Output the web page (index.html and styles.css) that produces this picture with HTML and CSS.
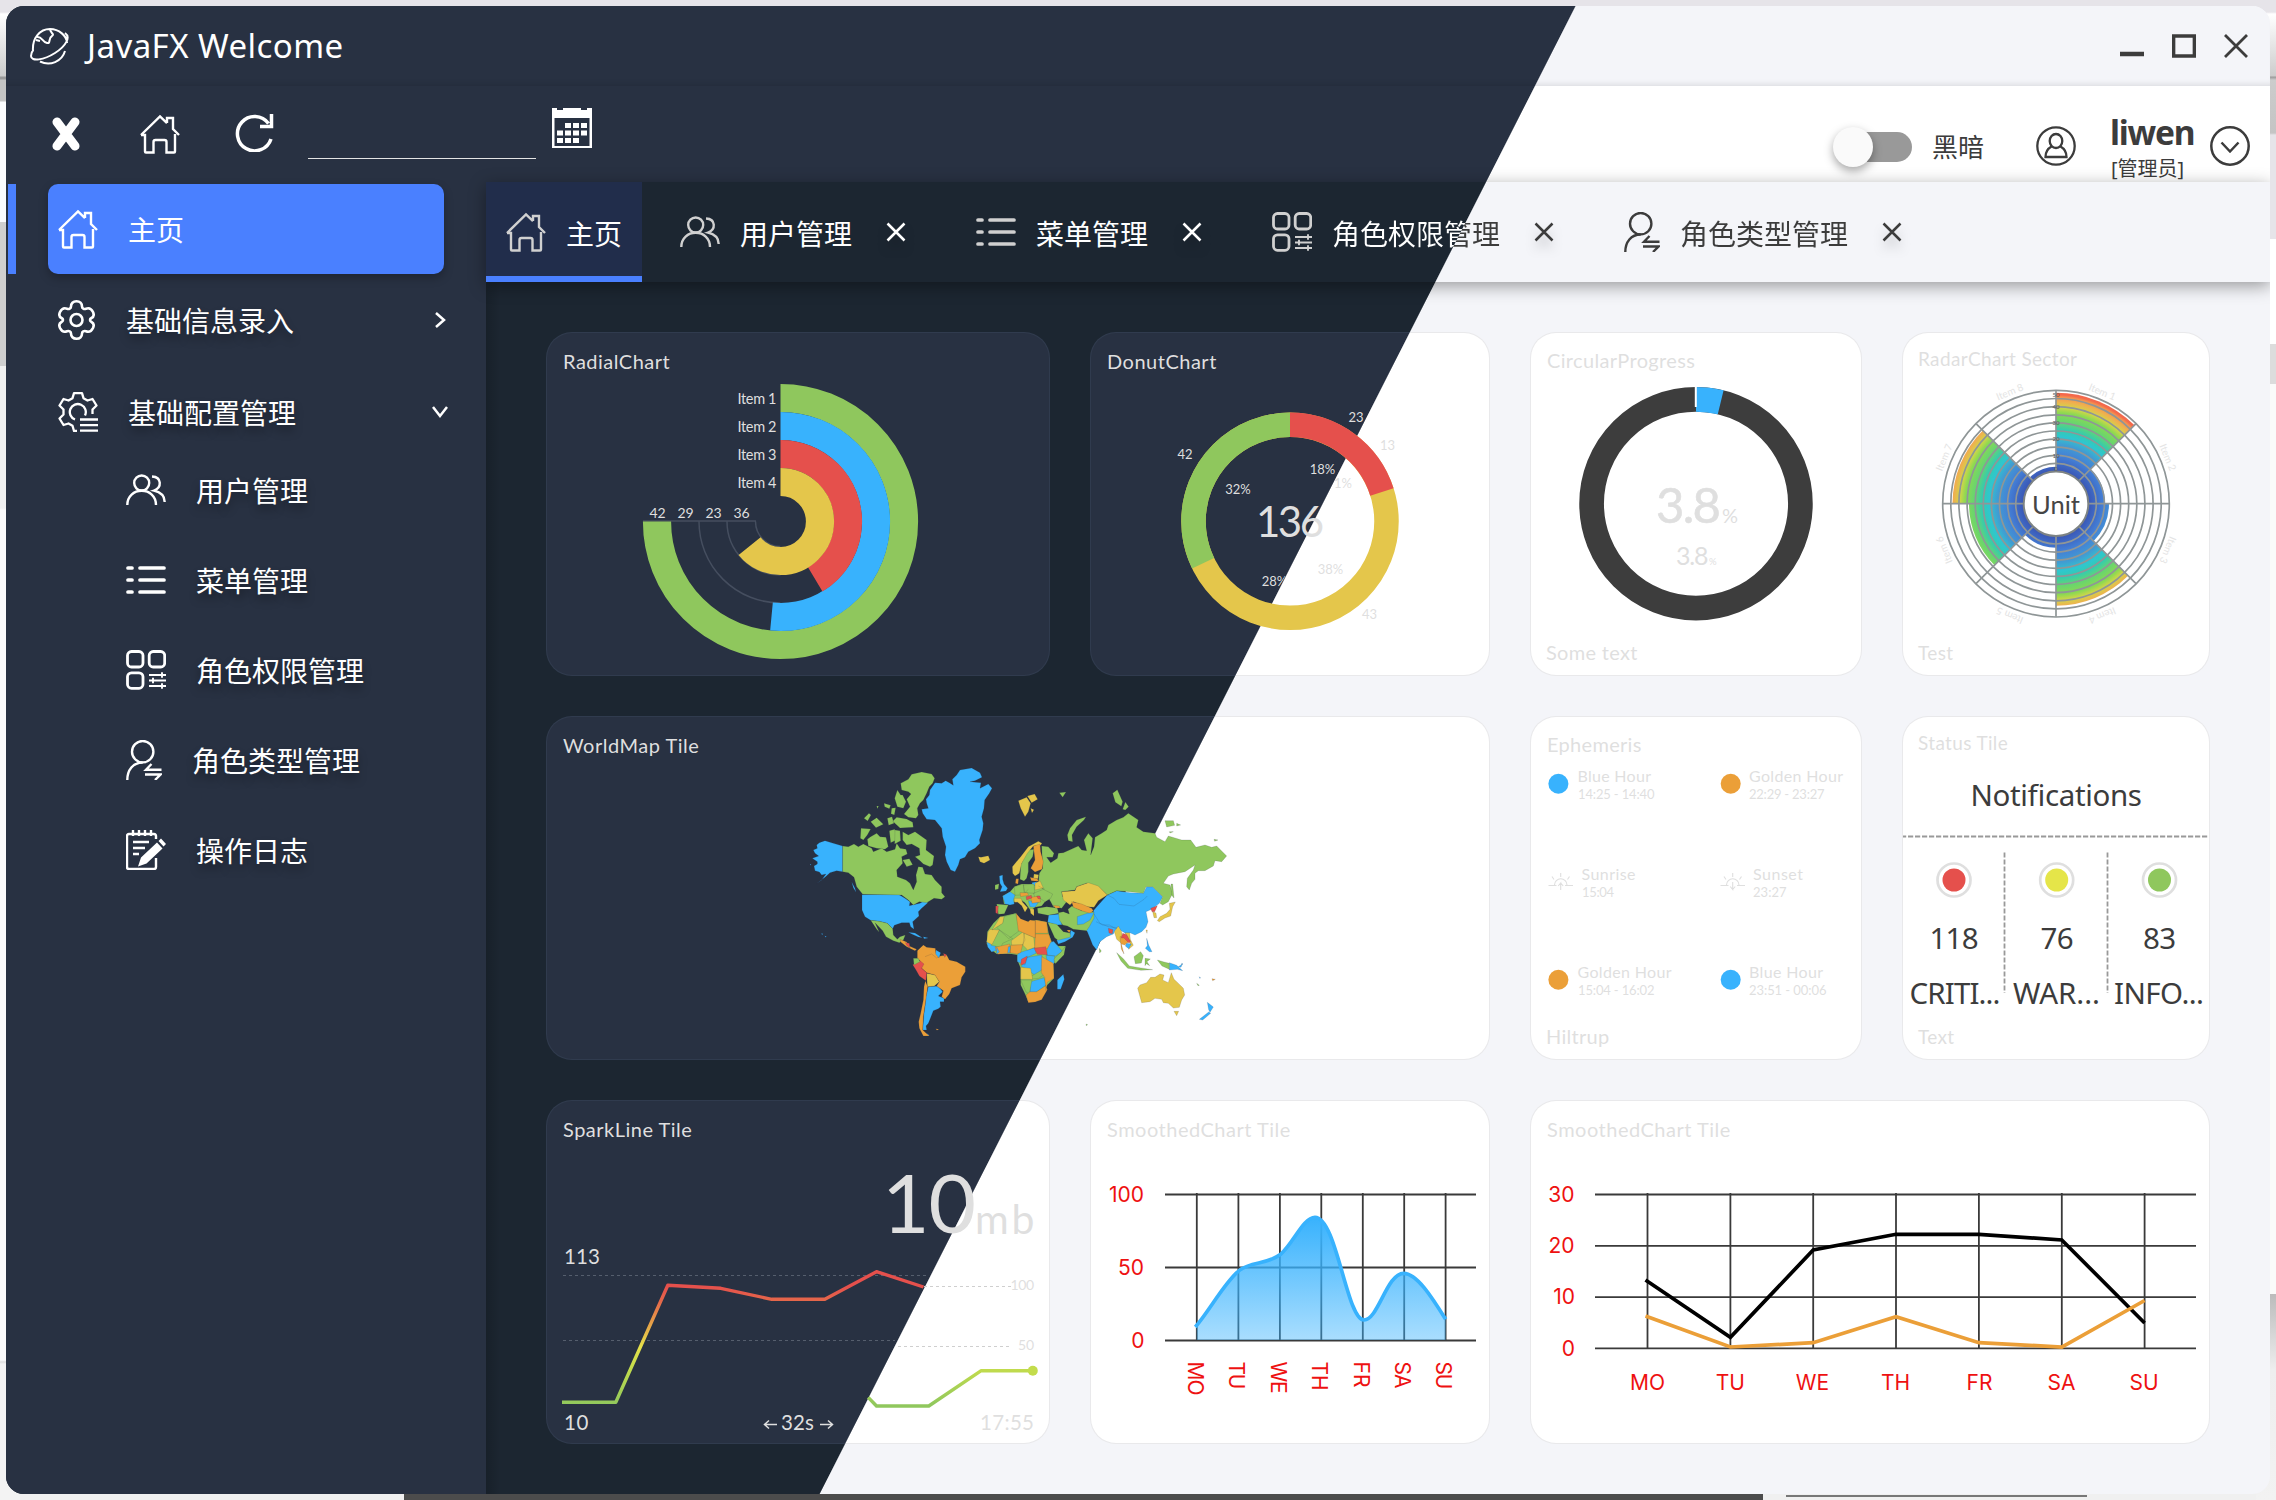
FILE: index.html
```html
<!DOCTYPE html>
<html lang="zh-CN">
<head>
<meta charset="utf-8">
<title>JavaFX Welcome</title>
<link rel="stylesheet" href="styles.css">
</head>
<body>
<svg class="defs" width="0" height="0" aria-hidden="true">
  <symbol id="home" viewBox="0 0 40 40"><path d="M1 21 20 2.500 27 9.200M27 9V4h6v11l6 6M1 21h4v16.500q0 1 1 1h7.500V28q0-2 2-2h9q2 0 2 2v10.500H34q1 0 1-1V20"/></symbol>
  <symbol id="users" viewBox="0 0 40 32"><circle cx="15.700" cy="9" r="7.500"/><path d="M1.300 31C1.300 22 8 16.800 15.700 16.800S30 22 30 31M26 2.500C36 3 36 13.500 28 16.500 34 18 38.700 22 38.700 28"/></symbol>
  <symbol id="list" viewBox="0 0 40 28"><path stroke-width="3.700" stroke-linecap="round" d="M2 2h4M14 2h24M2 14h4M14 14h24M2 26h4M14 26h24"/></symbol>
  <symbol id="perm" viewBox="0 0 40 40"><g stroke-width="2.800"><rect x="1.500" y="1.500" width="15.500" height="15.500" rx="4"/><rect x="23.200" y="1.500" width="15.500" height="15.500" rx="4"/><rect x="1.500" y="22.800" width="15.500" height="15.500" rx="4"/></g><path stroke-width="1.900" d="M23 25h17M23 30.500h17M23 36h17M36 22.300v5.400M27 27.800v5.400M36 33.300v5.400"/></symbol>
  <symbol id="role" viewBox="0 0 36 40"><circle cx="16.700" cy="11.700" r="10.700"/><path d="M1.300 40C1.300 30 7 22.500 16.700 22.500M25.500 24 20 29.700h15.500M19 34.500h15.500L29 40"/></symbol>
  <symbol id="log" viewBox="0 0 40 40"><path d="M30 9V6q0-2-2-2H3Q1 4 1 6v31q0 2 2 2h25q2 0 2-2v-9M7 0v6M13 0v6M19 0v6M25 0v6M7 12h16M7 18h12M7 24h6"/><path class="solid" stroke="none" d="m12 36.500 3-9L31 12.500l5.500 6L20.500 33.500zM32.500 11 35 8.500 40 14l-2.500 2.500z"/></symbol>
  <symbol id="gear" viewBox="0 0 37 40"><path stroke-width="2.600" d="M13 6.500C13 3.500 15 1.300 18.500 1.300S24 3.500 24 6.500C24 8.500 26 9.500 28 8.700 31 7.500 33.500 9 35 12 36.300 15 35.500 17 33.500 18 31.500 19 31.500 21 33.500 22 35.500 23 36.300 25 35 28 33.500 31 31 32.500 28 31.300 26 30.500 24 31.500 24 33.500 24 36.500 22 38.700 18.500 38.700S13 36.500 13 33.500C13 31.500 11 30.500 9 31.300 6 32.500 3.500 31 2 28 .7 25 1.500 23 3.500 22 5.500 21 5.500 19 3.500 18 1.500 17 .7 15 2 12 3.500 9 6 7.500 9 8.700 11 9.500 13 8.500 13 6.500Z"/><circle cx="18.500" cy="20" r="6" stroke-width="2.600"/></symbol>
  <symbol id="gearlist" viewBox="0 0 40 40"><path stroke-width="2.300" stroke-linejoin="round" d="M19 39h-3l-1.500-5.200-4-2.300-5 1.500-4-6.500 4-4v-5l-4-4 4-6.500 5 1.500 4-2.300L16 1.200h8l1.500 5 4 2.300 5-1.500 4 6.500-4 4V22M17 27.500A8 8 0 1 1 27 23.500M22 27.500h18M22 33.200h18M22 38.700h18"/></symbol>
  <symbol id="close" viewBox="0 0 20 20"><path d="m1.500 1.500 17 17M18.500 1.500l-17 17"/></symbol>
</svg>

<div class="window">
  <header class="titlebar">
    <svg class="logo" viewBox="0 0 40 37" fill="none" stroke="#fff" stroke-width="2"><path d="M3 23C2 10 10 1 20 1c9 0 17 7 17 14M35 5c6 4 1 13-10 20S1 34 1 28c0-2 .5-4 2-5.500M10 33.500c10 5 22 0 25-10.500M7 9c5-1 5 5 10 6 4 1 1-5 5-7 3-2-2-3-2-7M6 12l4 1"/></svg>
    <h1>JavaFX Welcome</h1>
    <div class="winbtns">
      <svg viewBox="0 0 24 24" width="24" height="24"><path d="M0 20h24" stroke="#3c3c3c" stroke-width="4.500"/></svg>
      <svg viewBox="0 0 24 24" width="24" height="24"><path d="M1.500 2h21v20h-21z" fill="none" stroke="#3c3c3c" stroke-width="3.700"/></svg>
      <svg viewBox="0 0 24 24" width="24" height="24"><path d="m1 1 22 22M23 1 1 23" stroke="#3c3c3c" stroke-width="2.800"/></svg>
    </div>
  </header>
  <div class="toolbar">
    <svg class="t-x" viewBox="0 0 28 34" width="28" height="34"><path d="m5 5 18 24M23 5 5 29" stroke="#fff" stroke-width="9" stroke-linecap="round"/></svg>
    <svg class="icon t-home"><use href="#home"/></svg>
    <svg class="t-refresh" viewBox="0 0 40 38" width="40" height="38" fill="none" stroke="#fff" stroke-width="3.500"><path d="M37 25A17.200 17.200 0 1 1 34.500 9.500M37.500 0v12.500H26"/></svg>
    <input class="date" type="text" aria-label="日期">
    <svg class="t-cal" viewBox="0 0 40 40" width="40" height="40"><path fill="#fff" fill-rule="evenodd" d="M0 0h5v2h6V0h18v2h6V0h5v40H0zM2.500 10v28h35V10z"/><path fill="#fff" d="M13 15h6v5h-6zm8 0h6v5h-6zm8 0h6v5h-6zM5 22.500h6v5H5zm8 0h6v5h-6zm8 0h6v5h-6zm8 0h6v5h-6zM5 30h6v5H5zm8 0h6v5h-6zm8 0h6v5h-6z"/></svg>
    <div class="account">
      <span class="switch"><i></i></span>
      <span class="mode">黑暗</span>
      <svg class="avatar" viewBox="0 0 40 40" width="40" height="40" fill="none" stroke="#3c3c3c" stroke-width="2.300"><circle cx="20" cy="20" r="18.700"/><ellipse cx="20" cy="15" rx="6.300" ry="7"/><path d="M15.500 20.500C11 23 9.500 26 9.500 31h21c0-5-1.500-8-6-10.500"/></svg>
      <div class="who"><b>liwen</b><span>[管理员]</span></div>
      <svg viewBox="0 0 40 40" width="40" height="40" fill="none" stroke="#3c3c3c" stroke-width="2.500"><circle cx="20" cy="20" r="18.700"/><path d="m11.500 16.500 8.500 9 8.500-9"/></svg>
    </div>
  </div>
  <div class="body">
    <nav class="side">
      <a class="item active"><svg class="icon"><use href="#home"/></svg><span>主页</span></a>
      <a class="item info"><svg class="icon g"><use href="#gear"/></svg><span>基础信息录入</span><svg class="chev" viewBox="0 0 16 18"><path d="m4 2 8 7-8 7"/></svg></a>
      <a class="item conf"><svg class="icon"><use href="#gearlist"/></svg><span>基础配置管理</span><svg class="chev" viewBox="0 0 16 18"><path d="m1 4 7 9 7-9"/></svg></a>
      <a class="sub"><svg class="icon"><use href="#users"/></svg><span>用户管理</span></a>
      <a class="sub"><svg class="icon"><use href="#list"/></svg><span>菜单管理</span></a>
      <a class="sub"><svg class="icon"><use href="#perm"/></svg><span>角色权限管理</span></a>
      <a class="sub"><svg class="icon n"><use href="#role"/></svg><span>角色类型管理</span></a>
      <a class="sub"><svg class="icon"><use href="#log"/></svg><span>操作日志</span></a>
    </nav>
    <main>
      <div class="tabs">
        <div class="tab on"><svg class="icon"><use href="#home"/></svg><span>主页</span></div>
        <div class="tab"><svg class="icon"><use href="#users"/></svg><span>用户管理</span><svg class="x"><use href="#close"/></svg></div>
        <div class="tab"><svg class="icon"><use href="#list"/></svg><span>菜单管理</span><svg class="x"><use href="#close"/></svg></div>
        <div class="tab"><svg class="icon"><use href="#perm"/></svg><span class="split">角色权限管理</span><svg class="x dk"><use href="#close"/></svg></div>
        <div class="tab"><svg class="icon n dk"><use href="#role"/></svg><span class="split">角色类型管理</span><svg class="x dk"><use href="#close"/></svg></div>
      </div>
      <div class="tiles">
        <section class="tile">
          <h2>RadialChart</h2>
          <svg viewBox="547 333 502 342">
            <g fill="none" stroke-width="28.200">
              <g stroke="#454e5f" stroke-width="1.500"><path d="M643 521h113M699 521.500a81.500 81.500 0 0 0 81.500 81.500M727 521.500a53.500 53.500 0 0 0 53.500 53.500M755.500 521.500a25 25 0 0 0 25 25"/></g>
              <g transform="rotate(-90 780.500 521.500)">
                <circle cx="780.500" cy="521.500" r="123.500" stroke="#8fc75d" pathLength="360" stroke-dasharray="270 360"/>
                <circle cx="780.500" cy="521.500" r="95.500" stroke="#38b2fd" pathLength="360" stroke-dasharray="185.500 360"/>
                <circle cx="780.500" cy="521.500" r="67.500" stroke="#e5504c" pathLength="360" stroke-dasharray="149 360"/>
                <circle cx="780.500" cy="521.500" r="39.500" stroke="#e4c64b" pathLength="360" stroke-dasharray="231.400 360"/>
              </g>
            </g>
            <g class="lab" font-size="14.500">
              <text x="737.500" y="403.500" textLength="39">Item 1</text><text x="737.500" y="431.500" textLength="39">Item 2</text><text x="737.500" y="459.500" textLength="39">Item 3</text><text x="737.500" y="487.500" textLength="39">Item 4</text>
              <g text-anchor="middle" font-size="14"><text x="657.500" y="517.500">42</text><text x="685.500" y="517.500">29</text><text x="713.500" y="517.500">23</text><text x="741.500" y="517.500">36</text></g>
            </g>
          </svg>
        </section>
        <section class="tile">
          <h2>DonutChart</h2>
          <svg viewBox="1091 333 398 342">
            <g fill="none" stroke-width="24.500" transform="rotate(-90 1290 521.300)">
              <circle cx="1290" cy="521.300" r="96.500" stroke="#e4c64b"/>
              <circle cx="1290" cy="521.300" r="96.500" stroke="#e5504c" pathLength="360" stroke-dasharray="72.200 360"/>
              <circle cx="1290" cy="521.300" r="96.500" stroke="#8fc75d" pathLength="360" stroke-dasharray="0 244.200 115.800 0"/>
            </g>
            <clipPath id="dark"><path d="M1091 333h317.900L1235 675h-144z"/></clipPath>
            <g class="lab" font-size="13" text-anchor="middle">
              <text x="1356" y="421.700">23</text><text x="1387.500" y="449.700">13</text><text x="1185" y="459.300">42</text><text x="1322.500" y="474">18%</text><text x="1343" y="487.700">1%</text><text x="1238" y="494">32%</text><text x="1330.500" y="573.700">38%</text><text x="1274.500" y="585.700" clip-path="url(#dark)">28%</text><text x="1369.600" y="619.300">43</text>
              <text x="1290" y="537" font-size="42" textLength="68">136</text>
            </g>
          </svg>
        </section>
        <section class="tile circ">
          <h2>CircularProgress</h2>
          <svg viewBox="1531 333 330 342">
            <g fill="none" stroke-width="24.700" transform="rotate(-90 1696 503.700)">
              <circle cx="1696" cy="503.700" r="104.400" stroke="#3d3d3d"/>
              <circle cx="1696" cy="503.700" r="104.400" stroke="#38b2fd" pathLength="360" stroke-dasharray="13.700 360"/>
            </g>
            <path d="M1695.800 386v21" stroke="#fff" stroke-width="2"/>
            <g class="lab">
              <text x="1656" y="523" font-size="49" textLength="65" stroke="#dfdfdf" stroke-width=".6">3.8</text><text x="1722" y="523" font-size="20" textLength="15">%</text>
              <text x="1676" y="565" font-size="25" textLength="32.500">3.8</text><text x="1709" y="565" font-size="9.500">%</text>
            </g>
          </svg>
          <p>Some text</p>
        </section>
        <section class="tile radar">
          <h2>RadarChart Sector</h2>
          <svg viewBox="1903 333 306 342">
            <defs><radialGradient id="heat" gradientUnits="userSpaceOnUse" cx="0" cy="0" r="113.500"><stop offset=".28" stop-color="#3a55b4"/><stop offset=".42" stop-color="#4480d6"/><stop offset=".52" stop-color="#419dd2"/><stop offset=".59" stop-color="#2fc6cf"/><stop offset=".65" stop-color="#34cbb0"/><stop offset=".72" stop-color="#66d570"/><stop offset=".8" stop-color="#8bd952"/><stop offset=".85" stop-color="#d2d648"/><stop offset=".9" stop-color="#efb04f"/><stop offset=".94" stop-color="#f39350"/><stop offset=".96" stop-color="#f4694c"/></radialGradient></defs>
            <g transform="translate(2056 503.700)">
              <g fill="url(#heat)">
                <path d="M0 0V-111A111 111 0 0 1 78.500-78.500Z"/>
                <path d="M0 0 34.600-34.600A49 49 0 0 1 49 0Z"/>
                <path d="M0 0H53A53 53 0 0 1 37.500 37.500Z"/>
                <path d="M0 0 72.100 72.100A102 102 0 0 1 0 102Z"/>
                <path d="M0 0V44A44 44 0 0 1-31.100 31.100Z"/>
                <path d="M0 0-61.500 61.500A87 87 0 0 1-87 0Z"/>
                <path d="M0 0H-103.500A103.500 103.500 0 0 1-73.200-73.200Z"/>
                <path d="M0 0-26.200-26.200A37 37 0 0 1 0-37Z"/>
              </g>
              <g fill="none" stroke="#8f9697" stroke-width="1.700"><circle r="113.300"/><circle r="105.200"/><circle r="97.100"/><circle r="88.900"/><circle r="80.800"/><circle r="72.700"/><circle r="64.600"/><circle r="56.500"/><circle r="48.400"/><circle r="40.300"/><path d="M0-113V113M-113 0H113M-80-80 80 80M80-80-80 80"/></g>
              <circle r="32.300" fill="#fff" stroke="#7d8384" stroke-width="2"/>
              <g font-family="Lato, sans-serif" font-size="6" fill="#555" text-anchor="middle"><text y="-107">50</text><text y="-95">40</text><text y="-79">30</text><text y="-62.500">20</text><text y="-46">10</text><text y="-33">0</text></g>
              <text y="9.800" font-family="Lato, sans-serif" font-size="25.500" fill="#454545" text-anchor="middle">Unit</text>
              <g class="lab faint" font-size="10" text-anchor="middle"><text transform="rotate(22.500)" y="-117.500">Item 1</text><text transform="rotate(67.500)" y="-117.500">Item 2</text><text transform="rotate(112.500)" y="-117.500">Item 3</text><text transform="rotate(157.500)" y="-117.500">Item 4</text><text transform="rotate(202.500)" y="-117.500">Item 5</text><text transform="rotate(247.500)" y="-117.500">Item 6</text><text transform="rotate(292.500)" y="-117.500">Item 7</text><text transform="rotate(337.500)" y="-117.500">Item 8</text></g>
            </g>
          </svg>
          <p>Test</p>
        </section>

        <section class="tile wide">
          <h2>WorldMap Tile</h2>
          <svg viewBox="547 717 942 342">
            <g class="map" transform="translate(780 740) scale(.33333)">
              <g class="g">
                <path d="M660 530 708 520 722 540 740 546 770 540 800 546 806 580 815 605 835 618 857 618 845 650 820 672 822 715 802 735 785 775 765 785 745 786 735 762 722 735 722 685 712 660 712 645 695 642 650 642 635 630 620 612 622 575 640 550Z"/>
                <path d="M703 440 725 432 760 432 775 425 790 448 818 462 812 475 795 485 785 498 765 502 752 512 735 488 720 478 705 482 700 492 672 492 668 468 690 455Z"/>
              </g>
              <g class="b">
                <path d="M485 130 497 122 508 128 520 136 517 118 530 105 540 90 575 84 600 98 606 112 585 122 570 125 603 128 600 145 625 132 636 145 628 160 614 180 612 205 605 230 610 250 608 270 598 300 600 310 585 325 565 335 555 352 540 358 535 375 525 395 512 390 500 365 495 345 498 320 488 290 485 265 465 240 440 238 428 220 425 208 445 205 440 190 438 178 448 165 450 150 465 128Z"/>
                <path d="M188 318 160 310 135 302 118 308 110 315 112 325 100 330 105 340 116 348 97 355 112 365 112 372 102 378 105 392 118 396 125 405 138 402 125 420 108 432 135 412 150 398 170 392 188 395Z"/>
                <path d="M246 464 355 463 375 475 390 485 388 497 420 490 445 475 442 490 425 505 415 515 417 528 398 545 402 568 392 560 388 548 365 548 343 556 338 566 322 550 298 544 272 541 255 530 246 510Z"/>
                <path d="M385 577l20 2 22 14-12-2-20-9ZM430 590l15 4-13 2ZM215 425l10 20 3 12-8-14Z"/>
                <path d="M445 740 475 738 488 755 475 768 492 775 492 785 480 785 482 800 475 806 460 812 455 825 450 838 445 850 438 858 440 870 428 870 430 845 432 820 435 800 438 770ZM440 880l8 6-4 2Z"/>
                <path d="M658 408 668 405 668 418 672 432 683 445 678 453 660 455 666 440 660 430ZM668 468 690 455 705 465 700 480 703 492 690 495 675 492ZM745 482l30 5-10 15-15-2ZM755 428l15-3 2 10-12 2Z"/>
                <path d="M806 525 840 522 846 554 830 555 803 547ZM830 600 870 585 872 570 885 578 878 592 855 605 835 612Z"/>
                <path d="M982 465 1010 452 1050 458 1090 460 1100 440 1118 440 1148 470 1138 490 1115 508 1098 515 1104 545 1098 562 1085 575 1065 585 1050 578 1040 582 1020 570 985 562 960 555 940 528 940 512 955 495Z"/>
                <path d="M918 570 930 548 942 522 960 550 985 560 1010 563 1000 582 980 590 960 605 950 630 938 615 930 595 922 575ZM1100 595l6 20 10 20-8 0-12-10 6-8Z"/>
                <path d="M1168 668l22 8 18 16-16-4-24 2ZM1195 680l12-8-4 10ZM1282 787l18 14-10 16-4-8ZM1286 816l6 4-24 20-10-2Z"/>
                <path d="M620 603l25 10 5 18-15 5-12-15ZM670 620l18 0-4 20-12 0ZM718 638 750 628 766 622 768 640 742 652 735 675 712 665 712 645ZM742 652l43-7 5 20-4 32-22 8-24-18-16-8ZM803 610l18-6 26 30-20 14-27-3ZM798 646l26 2-2 24-20-6ZM752 725l40-12 6 22-30 22-18 0ZM832 720l18-17 3 15-11 30-10 0Z"/>
                <path d="M90 372l4 2-4 2ZM124 580l6 2-4 2ZM134 587l6 3-4 2ZM1205 670l4 2-4 2ZM1258 710l4 4-3 1Z"/>
              </g>
              <g class="g">
                <path d="M395 103 425 96 455 102 464 115 458 130 448 140 440 160 430 180 420 190 412 205 415 225 408 235 385 232 372 222 390 200 380 178 393 162 385 155 365 150 362 130 385 118ZM352 150 362 165 368 165 378 185 370 205 352 200 344 175Z"/>
                <path d="M243 265 272 267 262 285 250 300 241 295ZM262 298 272 290 290 280 300 290 318 292 325 320 315 328 290 325 265 318ZM368 275 385 285 405 275 440 300 438 330 462 348 458 375 450 380 430 372 420 362 405 350 420 345 418 325 395 312 380 315 368 300Z"/>
                <path d="M328 272l16-4 10 30-22 10ZM350 232l30 5 18 10 2 15-40 2-22-20ZM272 245l18-12 20 20-22 10ZM252 235l15-15 6 5-10 18ZM322 235l14-5 6 20-16 6ZM335 205l12-2-4 22-10-4ZM312 190l20 6-4 10-14-6ZM290 198l6 0-4 8Z"/>
                <path d="M345 270l15 2 2 30-18 10ZM368 360l20-4 10 18-18 6Z"/>
                <path d="M188 318 205 320 222 312 235 320 250 312 275 325 280 335 305 325 320 335 345 328 350 310 360 325 378 328 382 342 365 350 368 370 350 390 352 410 378 420 390 430 400 450 410 425 408 405 415 380 428 382 435 402 455 405 465 420 485 440 485 458 495 470 485 478 462 475 440 488 418 485 400 495 385 480 365 465 248 463 230 440 222 412 205 398 188 395Z"/>
                <path d="M272 541 298 544 322 550 338 566 340 585 352 598 360 590 376 585 370 600 358 608 340 602 318 590 308 572 285 548 298 577 290 568Z"/>
                <path d="M645 435l12-4-2 16-10 2ZM722 375 735 345 745 330 762 328 758 350 745 368 745 395 740 415 732 423 720 418Z"/>
                <path d="M785 318 805 320 822 340 818 352 800 352 812 368 832 355 835 340 850 338 880 325 895 318 905 330 920 332 912 300 925 280 938 295 932 345 942 320 945 292 965 280 980 270 985 255 1010 240 1030 232 1045 220 1075 240 1070 262 1090 275 1125 280 1130 292 1155 305 1165 288 1205 300 1232 300 1248 322 1275 315 1295 322 1310 318 1340 348 1325 365 1305 362 1300 378 1275 392 1255 392 1245 400 1245 418 1235 430 1228 450 1220 440 1222 415 1240 390 1245 375 1215 395 1180 402 1165 408 1150 430 1170 435 1178 460 1165 485 1148 495 1140 490 1148 470 1118 440 1098 440 1090 460 1050 455 1010 452 982 465 955 440 920 430 890 440 885 450 845 455 848 470 862 482 845 505 820 500 812 485 800 465 790 448 775 430 778 400 788 385Z"/>
                <path d="M865 302 862 285 870 265 890 240 918 230 912 240 890 260 876 285 878 305ZM998 160l14-11 16 36-4 14-18-12ZM1028 208l8-22 10 14-10 10ZM1155 242l25 0 4 14-24 5ZM1190 250l12 5-12 3ZM838 158l20-2-10 16ZM1302 298l12 2-10 4ZM1168 275l12 0-10 4ZM1173 432l5 0 4 42-7-8Z"/>
                <path d="M703 440l27-8 3 32-28 2ZM730 435l32-3 2 28-30-2ZM760 460 790 448 818 462 812 475 795 485 780 475 765 472ZM650 492l35 3-12 26-18 2ZM772 505l28-5 32 4 4 16-32 6-30-6Z"/>
                <path d="M835 518 850 515 868 522 864 508 876 498 905 512 942 516 942 535 928 560 920 572 880 568 862 558 848 555 838 540ZM803 547l27 6 20 22 20 4 2 12-38 10-10-8ZM672 530l36-10 4 20 6 32-32 24-36-34 18-14ZM658 570l40 26-30 14-5 12-30-6Z"/>
                <path d="M857 618l-5 26-26 27-4-14 22-22ZM755 708l30-18 13 10-22 15-20 2ZM722 720l34 0-8 42-10-6ZM958 625l6 8-5 6ZM1010 638l20 18 18 22 30 5 40 6-35 2-40-6-20-22ZM1062 650l20-15 8 12-6 22-18 2ZM1095 655l16 2-10 8 8 12-10-6-4 6ZM1132 660l20 6 16 4 0 18-22-10ZM918 852l5 2-4 3ZM1250 730l8 6-4 1Z"/>
              </g>
              <g class="y">
                <path d="M595 350 603 352 625 347 630 360 612 370 600 365ZM715 182 740 172 752 190 745 215 735 230 722 205ZM742 168l22-6 9 16-18 10ZM752 205l10 4-6 10ZM697 380 722 350 745 320 775 304 786 310 782 316 760 318 742 340 725 370 718 400 705 408 698 400Z"/>
                <path d="M845 455 885 452 890 440 925 428 955 438 982 465 955 482 942 502 920 500 880 485 870 495 850 480ZM765 430l15-8 10 22-25 6ZM762 402l14 2-2 12-14 0ZM703 475l20 0 5 12 15 16-8 14-10-20-12-10-10 0ZM750 505l12 3 0 20-10-8Z"/>
                <path d="M660 530l12 0-4 20-32 20 14-22ZM630 568l28 2-22 44-16-8 4-30ZM694 602l36-27 5 25-8 15-32 0ZM733 580l28 12 4 30-22 8-14-14ZM722 682l30 3 6 33-36 0ZM440 700l26 5 12 20-15 13-21 2Z"/>
                <path d="M1003 575 1015 558 1025 575 1028 600 1022 608 1010 598ZM1035 578l14 0 2 20 9 18-14 12 4-18ZM1118 515l10 4 2 14-8 0ZM1132 542 1140 530 1160 520 1170 508 1168 490 1186 486 1178 500 1172 528 1155 534 1138 545ZM1098 570l4 0-1 10Z"/>
                <path d="M1073 745 1080 735 1100 728 1112 712 1125 712 1140 702 1152 705 1148 720 1165 728 1174 698 1182 718 1190 725 1210 745 1214 765 1205 780 1198 802 1180 804 1165 790 1150 788 1145 778 1125 775 1110 785 1085 788 1080 770ZM1182 814l14 0-6 13Z"/>
              </g>
              <g class="o">
                <path d="M760 318 780 312 782 335 790 365 786 388 765 396 752 385 765 360ZM750 412l22 4 4 8-22-2ZM708 416l8 0-2 16-8-2ZM720 458l22 0 4 8-24 4ZM752 472l26-4 4 18-26 4ZM875 485 905 492 935 505 940 512 930 520 905 512 880 502ZM820 496l18 2 2 6-14 0Z"/>
                <path d="M360 598 380 606 388 618 410 628 405 632 380 620 362 606ZM412 632 430 615 440 622 466 625 468 640 480 648 500 645 508 660 530 665 556 680 556 695 545 712 540 735 515 745 508 762 495 778 485 770 490 752 470 738 478 725 465 705 440 698 425 685 420 662 412 655Z"/>
                <path d="M436 722 443 740 436 790 430 830 428 870 448 888 430 888 418 865 416 845 422 820 430 780 432 740ZM467 866l10 2-6 3ZM1020 590l18-5 12 18-16 12-10-3 8 30-8-15Z"/>
                <path d="M708 520 722 536 745 545 750 540 766 542 766 594 715 572ZM766 540l34 6 4 34-38 0ZM766 582l40 0 8 22-12 22-38-2ZM692 616l36-2-6 24-12 4-20-4ZM645 622l44-10 2 28-38 3ZM785 650l35 20 2 45-20 12-4 25-4-40-10-14ZM738 765l12-10 20 0 28-18 4 12-17 30-20 7-20 2ZM860 570l12 0-4 8ZM1296 716l10 2-8 4Z"/>
              </g>
              <g class="r">
                <path d="M398 674 420 662 432 672 425 685 440 698 438 722 418 708 408 690ZM376 608l12 2 2 14-10-8ZM490 640l10 4-6 8ZM647 498l8 0-2 24-6-4ZM738 470l16-4 2 8-16 6ZM770 468l10 0 2 8-8 0ZM762 625l35-5 5 24-30-1ZM724 658l18-10-6 22-14 6ZM985 565l14 4-2 12-10-2ZM1028 580l12 4 12 22-6 2-14-14-8 0ZM1112 505l20-8-8 18-8 0Z"/>
              </g>
              <g class="g"><path d="M400 655l15 0 5 10-18 10Z"/></g>
              <g class="b"><path d="M468 630l14 8-5 16-10-12ZM892 530l30-10 20-2-12 22-20 12-18 2ZM1040 610l14 2-8 14-10-8ZM650 622l8 14-8 6ZM685 620l6 0-2 18-6 0Z"/></g>
              <g fill="none" stroke="#52697c" stroke-width="1.500"><path d="M982 465l20 10 15 18 45 5 30-20 10-10M948 545l20 10 20 0 20 12M435 650l20-8 15 12 15-8M468 738l15 10 8 8M735 458l10-10M795 448l-20-10"/></g>
            </g>
          </svg>
        </section>
        <section class="tile eph">
          <h2>Ephemeris</h2>
          <svg viewBox="1531 717 330 342">
            <g fill="#38b2fd"><circle cx="1558.400" cy="783.700" r="10"/><circle cx="1730.700" cy="979.700" r="10"/></g>
            <g fill="#eb9f38"><circle cx="1730.700" cy="783.700" r="10"/><circle cx="1558.400" cy="979.700" r="10"/></g>
            <g fill="none" stroke="#dfdfdf" stroke-width="1.100"><path d="M1548.500 885.500h8M1565 885.500h8M1554.500 885a6 6 0 1 1 12.500 0M1560.700 873v4M1552 876.500l2 3M1569.500 876.500l-2 3M1560.700 890v-7l-2.500 3M1560.700 883l2.500 3"/><path d="M1720.500 885.500h8M1737 885.500h8M1726.500 885a6 6 0 1 1 12.500 0M1732.700 873v4M1724 876.500l2 3M1741.500 876.500l-2 3M1732.700 882v7.500l-2.500-3M1732.700 889.500l2.500-3"/></g>
            <g class="lab" font-size="16">
              <text x="1577.500" y="781.500" textLength="73.500">Blue Hour</text><text x="1749" y="781.500" textLength="94">Golden Hour</text>
              <text x="1581.500" y="879.500" textLength="54">Sunrise</text><text x="1753" y="879.500" textLength="50">Sunset</text>
              <text x="1577.500" y="977.500" textLength="94">Golden Hour</text><text x="1749" y="977.500" textLength="74">Blue Hour</text>
            </g>
            <g class="lab" font-size="13">
              <text x="1578" y="799" textLength="76.500">14:25 - 14:40</text><text x="1749" y="799" textLength="75.500">22:29 - 23:27</text>
              <text x="1582" y="897" textLength="32">15:04</text><text x="1753" y="897" textLength="33.500">23:27</text>
              <text x="1578" y="995" textLength="76.500">15:04 - 16:02</text><text x="1749" y="995" textLength="77.500">23:51 - 00:06</text>
            </g>
          </svg>
          <p>Hiltrup</p>
        </section>
        <section class="tile status">
          <h2>Status Tile</h2>
          <svg viewBox="1903 717 306 342">
            <path d="M1901 836.500h310" stroke="#999" stroke-width="2" stroke-dasharray="5.200 1.800"/>
            <path d="M2004.500 852.500V993M2107.500 852.500V993" stroke="#999" stroke-width="1.800" stroke-dasharray="5 2"/>
            <g fill="none" stroke="#dfdfdf" stroke-width="2.700"><circle cx="1954" cy="880" r="16.500"/><circle cx="2056.700" cy="880" r="16.500"/><circle cx="2159.500" cy="880" r="16.500"/></g>
            <circle cx="1954" cy="880" r="11.500" fill="#e5504c"/><circle cx="2056.700" cy="880" r="11.500" fill="#e5e549"/><circle cx="2159.500" cy="880" r="11.500" fill="#8fc75d"/>
            <g font-family="'Noto Sans', sans-serif" font-size="29.500" fill="#3c3c3c">
              <text x="1970.500" y="806" textLength="171.500">Notifications</text>
              <text x="1929.500" y="949" textLength="49">118</text><text x="2040.500" y="949" textLength="33">76</text><text x="2143" y="949" textLength="33">83</text>
              <text x="1909.500" y="1003.700" textLength="91">CRITI...</text><text x="2013" y="1003.700" textLength="87">WAR...</text><text x="2114" y="1003.700" textLength="90">INFO...</text>
            </g>
          </svg>
          <p>Text</p>
        </section>

        <section class="tile">
          <h2>SparkLine Tile</h2>
          <svg viewBox="547 1101 502 342">
            <defs><linearGradient id="temp" gradientUnits="userSpaceOnUse" x1="0" y1="1280" x2="0" y2="1406"><stop offset=".05" stop-color="#e5504c"/><stop offset=".17" stop-color="#e5684a"/><stop offset=".36" stop-color="#e6a548"/><stop offset=".53" stop-color="#e5e04a"/><stop offset=".7" stop-color="#c3dc4c"/><stop offset="1" stop-color="#8fc75d"/></linearGradient></defs>
            <path d="M563 1275.500H926M563 1340.500H895" stroke="#555e6d" stroke-width="1.200" stroke-dasharray="3 3"/>
            <path d="M924 1286.500h87M898 1346.500h112" stroke="#cfcfcf" stroke-width="1.200" stroke-dasharray="3 3"/>
            <g fill="none" stroke="url(#temp)" stroke-width="3.400" stroke-linejoin="round"><path d="M562 1402.300H615.800L667.800 1285.300 720.800 1288.300 771.800 1299.300H824.800L876.500 1271.700 923.500 1287"/><path d="M868.200 1397.300 876.500 1406H928.800L981.200 1370.700H1032"/></g>
            <circle cx="1032.800" cy="1370.700" r="5" fill="#c3dc4c"/>
            <g class="lab" font-size="20.500">
              <text x="882" y="1233" font-size="82" textLength="94">10</text><text x="975" y="1233.500" font-size="41" textLength="59.500">mb</text>
              <text x="564" y="1263.700" textLength="36">113</text><text x="564" y="1429.700" textLength="24.500">10</text>
              <text x="781" y="1429.700" textLength="33">32s</text><text x="980" y="1429.700" textLength="54">17:55</text>
              <g font-size="14"><text x="1010.500" y="1290" textLength="23.500">100</text><text x="1018" y="1350" textLength="16">50</text></g>
            </g>
            <path d="M777 1424.500h-12.500m4.500-4-4.500 4 4.500 4M820 1424.500h12.500m-4.500-4 4.500 4-4.500 4" fill="none" stroke="#dfdfdf" stroke-width="1.500"/>
          </svg>
        </section>
        <section class="tile">
          <h2>SmoothedChart Tile</h2>
          <svg viewBox="1091 1101 398 342">
            <defs><linearGradient id="area" x1="0" y1="0" x2="0" y2="1"><stop offset="0" stop-color="#38b2fd"/><stop offset="1" stop-color="#38b2fd" stop-opacity=".43"/></linearGradient></defs>
            <path d="M1165 1194.500h311M1165 1267.500h311M1165 1340.500h311M1196.800 1193v147M1238.400 1193v147M1279.900 1193v147M1321.300 1193v147M1362.800 1193v147M1404.200 1193v147M1445.600 1193v147" stroke="#3a3a3a" stroke-width="1.800"/>
            <g transform="translate(1070 1080) scale(.33333)"><path fill="url(#area)" d="M380 741C420 690 465 605 508 571 545 543 590 555 632 523 670 490 700 412 735 412 800 412 830 720 882 720 925 720 950 580 1001 580 1040 580 1085 650 1127 718V780H380Z"/><path fill="none" stroke="#38b2fd" stroke-width="11" d="M376 741C420 690 465 605 508 571 545 543 590 555 632 523 670 490 700 412 735 412 800 412 830 720 882 720 925 720 950 580 1001 580 1040 580 1085 650 1127 718"/></g>
            <g class="red" text-anchor="end"><text x="1144" y="1201.700">100</text><text x="1144" y="1275">50</text><text x="1144.500" y="1347.700">0</text></g>
            <g class="red"><text transform="translate(1188 1361.500) rotate(90)" textLength="34">MO</text><text transform="translate(1229 1361.500) rotate(90)" textLength="28">TU</text><text transform="translate(1271 1361.500) rotate(90)" textLength="32">WE</text><text transform="translate(1312 1361.500) rotate(90)" textLength="29">TH</text><text transform="translate(1353.500 1361.500) rotate(90)" textLength="26">FR</text><text transform="translate(1395 1361.500) rotate(90)" textLength="27">SA</text><text transform="translate(1436 1361.500) rotate(90)" textLength="28">SU</text></g>
          </svg>
        </section>
        <section class="tile two">
          <h2>SmoothedChart Tile</h2>
          <svg viewBox="1531 1101 678 342">
            <path d="M1595 1194.500h601M1595 1245.800h601M1595 1297.100h601M1595 1348.400h601M1647.500 1193v155M1730.400 1193v155M1813.200 1193v155M1896 1193v155M1978.900 1193v155M2061.800 1193v155M2144.600 1193v155" stroke="#3a3a3a" stroke-width="1.800"/>
            <g fill="none" stroke-width="3.700"><path stroke="#000" d="M1645.500 1280 1730.400 1337.300 1813.200 1250 1896 1234.300H1978.900L2061.800 1240 2144.600 1323"/><path stroke="#eb9f38" d="M1645.500 1316 1730.400 1347 1813.200 1342.700 1896 1316.700 1978.900 1342.700 2061.800 1347 2144.600 1300.500"/></g>
            <g class="red" text-anchor="end"><text x="1574.500" y="1201.700">30</text><text x="1574.500" y="1253">20</text><text x="1575" y="1304.300">10</text><text x="1575" y="1356">0</text></g>
            <g class="red" text-anchor="middle"><text x="1647.500" y="1390">MO</text><text x="1730.400" y="1390">TU</text><text x="1812.500" y="1390">WE</text><text x="1895.500" y="1390">TH</text><text x="1979.500" y="1390">FR</text><text x="2061.500" y="1390">SA</text><text x="2144" y="1390">SU</text></g>
          </svg>
        </section>
      </div>
    </main>
  </div>
</div>
</body>
</html>
```
FILE: styles.css
```css
:root {
  /* one diagonal, shared by every surface through fixed backgrounds */
  --cut: 1406.9px;
  --panel: linear-gradient(116.93deg, #283142 var(--cut), #fff calc(var(--cut) + 1px));
  --bar: linear-gradient(116.93deg, #283142 var(--cut), #f4f5f9 calc(var(--cut) + 1px));
  --back: linear-gradient(116.93deg, #1c2631 var(--cut), #f4f5f9 calc(var(--cut) + 1px));
  --edge: linear-gradient(116.93deg, #303b4e var(--cut), #e9e9eb calc(var(--cut) + 1px));
  --ink: linear-gradient(116.93deg, #fff var(--cut), #3c3c3c calc(var(--cut) + 1px));
}
* { box-sizing: border-box; }
html, body { margin: 0; width: 2276px; height: 1500px; overflow: hidden; }
body {
  padding: 6px;
  font-family: "Noto Sans", "Noto Sans CJK SC", sans-serif;
  background:
    linear-gradient(#e6e4e9, #e6e4e9) 0 0 / 2276px 6px no-repeat,
    linear-gradient(#4c4c4c, #4c4c4c) 404px 1494px / 1359px 6px no-repeat,
    linear-gradient(#777, #777) 1786px 1495px / 301px 2px no-repeat,
    linear-gradient(#e6e4e9 12px, #fff 14px, #ccc 76px, #999 77px, #999 79px, #c4c4c4 80px, #c4c4c4 101px, #fbfcfe 102px, #fbfcfe 222px, #cfcfcf 222px, #cfcfcf 366px, #f0f0f0 366px, #f0f0f0 508px, #fbfbfb 510px, #fbfbfb 1360px, #ddd 1362px, #f3f3f3 1364px) 0 0 / 20px 1500px no-repeat,
    linear-gradient(#e6e4e9 12px, #fff 14px, #ccc 76px, #999 77px, #ccc 80px, #c4c4c4 133px, #e6e4e9 135px, #e6e4e9 239px, #fff 239px, #fff 344px, #dcdcdc 344px, #dcdcdc 384px, #fafbfa 384px, #fafbfa 1294px, #bbb 1294px, #eee 1370px, #f2f2f2 1500px) 2256px 0 / 20px 1500px no-repeat,
    #f0f0f0;
}
h1, h2, p { margin: 0; font-weight: 400; }
.defs { display: block; height: 0; }
.window { height: 1488px; border-radius: 18px; overflow: hidden; display: flex; flex-direction: column; background: var(--back) fixed; }

.titlebar { flex: none; height: 80px; display: flex; align-items: center; padding: 0 22px 0 24px; background: var(--bar) fixed; box-shadow: inset 0 -6px 6px -5px rgba(0, 0, 0, .12); }
.logo { width: 40px; height: 37px; margin-right: 17px; }
h1 { font-size: 33px; line-height: 44px; color: #fff; letter-spacing: .45px; }
.winbtns { margin-left: auto; display: flex; gap: 28px; }

.toolbar { flex: none; height: 96px; display: flex; align-items: flex-start; padding: 0 20px 0 46px; background: var(--panel) fixed; }
.icon { display: block; flex: none; width: 40px; height: 40px; fill: none; stroke: currentColor; stroke-width: 2.400; color: #fff; }
.icon.g { width: 37px; }
.icon.n { width: 36px; }
.solid { fill: #fff; }
.t-x { margin-top: 31px; }
.t-home { margin: 28px 0 0 60px; }
.t-refresh { margin: 28px 0 0 54px; }
.date { width: 228px; height: 44px; margin: 29px 0 0 34px; border: 0; border-bottom: 1px solid #e4e4e4; background: none; padding: 0; }
.t-cal { margin: 22px 0 0 16px; }
.account { margin: 0 0 0 auto; height: 96px; display: flex; padding-top: 40px; color: #3c3c3c; }
.switch { width: 79px; height: 40px; padding: 6px 0 4px 9px; display: flex; }
.switch i { width: 70px; height: 30px; border-radius: 15px; background: #999; display: flex; align-items: center; }
.switch i::before { content: ""; flex: none; width: 40px; height: 40px; margin: -1px 0 0 -9px; border-radius: 50%; background: #fafafa; box-shadow: 0 4px 10px rgba(0, 0, 0, .35); }
.mode { width: 52px; margin-left: 20px; font-size: 26px; line-height: 42px; }
.avatar { margin-left: 52px; }
.who { width: 99px; margin: -15px 0 0 35px; }
.who b { display: block; font-size: 33.500px; line-height: 42px; letter-spacing: -1.200px; margin-left: -1px; }
.who span { display: block; font-size: 20px; line-height: 30px; margin-top: 1px; white-space: nowrap; }

.body { flex: 1; min-height: 0; display: flex; }
.side { flex: none; width: 480px; padding-top: 2px; background: linear-gradient(#4a80ff, #4a80ff) 2px 2px / 8px 90px no-repeat, #283142; color: #fff; font-size: 28px; }
.side span { text-shadow: 0 6px 8px rgba(0, 0, 0, .35); }
.item, .sub { display: flex; align-items: center; height: 90px; padding: 0 38px 0 52px; }
.side .icon { margin-right: 30px; }
.item.active { margin: 0 42px 0 42px; padding: 0 0 0 10px; background: #4a80ff; border-radius: 10px; box-shadow: 0 4px 10px rgba(0, 0, 0, .25); }
.item.active span { text-shadow: none; }
.item.info { padding-top: 2px; }
.item.info .icon { margin-right: 31px; }
.item.conf { height: 82px; padding-top: 7px; margin-top: 3px; }
.item.conf + .sub { margin-top: -4px; }
.chev { width: 16px; height: 18px; margin-left: auto; fill: none; stroke: #fff; stroke-width: 2.500; }
.sub { padding-left: 120px; }

main { flex: 1; min-width: 0; background: linear-gradient(90deg, rgba(0, 0, 0, .16), transparent 14px); }
.tabs { position: relative; height: 100px; display: flex; background: var(--back) fixed; box-shadow: 0 4px 16px rgba(0, 0, 0, .38); }
.tab { display: flex; align-items: center; height: 100px; padding: 0 32px 0 38px; font-size: 28px; color: #fff; }
.tab .icon { color: #d0d0d0; margin-right: 20px; }
.tab span { line-height: 44px; margin-top: 4px; }
.tab .split { background: var(--ink) fixed; -webkit-background-clip: text; background-clip: text; color: transparent; }
.tab.on { padding: 6px 20px 0; background: #212d4b; border-bottom: 6px solid #4a80ff; }
.x { width: 20px; height: 20px; margin-left: 34px; fill: none; stroke: #fff; stroke-width: 2.500; overflow: visible; filter: drop-shadow(0 8px 6px rgba(0, 0, 0, .2)); }
.x.dk { stroke: #3c3c3c; }
.tab .icon.dk { color: #3c3c3c; }

.tiles { display: grid; grid-template-columns: 504px 400px 332px 308px; grid-auto-rows: 344px; gap: 40px; padding: 50px 60px; }
.tile { display: grid; border: 1px solid transparent; border-radius: 26px; overflow: hidden; background: var(--panel) fixed padding-box, var(--edge) fixed border-box; color: #dfdfdf; font-family: Lato, sans-serif; }
.tile > * { grid-area: 1 / 1; }
.tile > svg { width: 100%; height: 100%; display: block; }
.tile.wide, .tile.two { grid-column: span 2; }
.tile h2, .tile p { font-size: 20px; line-height: 24px; padding: 16px 0 0 16px; letter-spacing: .5px; white-space: nowrap; }
.tile p { align-self: end; padding: 0 0 11px 15px; letter-spacing: .3px; }
.circ h2 { padding-top: 15px; letter-spacing: .35px; }
.eph h2 { padding-top: 15px; letter-spacing: .3px; }
.radar h2, .status h2, .radar p, .status p { font-size: 19px; padding-left: 15px; letter-spacing: .35px; }
.radar h2 { padding-top: 14px; }
.status h2 { padding-top: 14px; }
.radar p, .status p { padding-bottom: 10px; }
.lab { font-family: Lato, sans-serif; fill: #dfdfdf; }
.faint { fill: #e4e4e4; }
.red { font-family: Inter, sans-serif; font-size: 21px; fill: #ee1111; }
.map path { stroke: rgba(40, 49, 66, .45); stroke-width: 1; }
.map .b path { fill: #38b2fd; }
.map .g path { fill: #8fc75d; }
.map .y path { fill: #e4c64b; }
.map .o path { fill: #eb9f38; }
.map .r path { fill: #e5504c; }
```
